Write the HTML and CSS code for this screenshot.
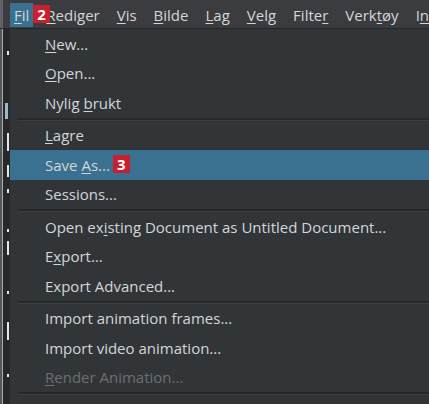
FILE: index.html
```html
<!DOCTYPE html>
<html>
<head>
<meta charset="utf-8">
<link rel="stylesheet" href="styles.css">
</head>
<body>
<div class="app">
  <div class="menubar">
    <span class="mb-item active"><span><u>F</u>il</span></span>
    <span class="mb-item"><span><u>R</u>ediger</span></span>
    <span class="mb-item"><span><u>V</u>is</span></span>
    <span class="mb-item"><span><u>B</u>ilde</span></span>
    <span class="mb-item"><span><u>L</u>ag</span></span>
    <span class="mb-item"><span><u>V</u>elg</span></span>
    <span class="mb-item"><span>Filte<u>r</u></span></span>
    <span class="mb-item"><span>Verk<u>t</u>øy</span></span>
    <span class="mb-item"><span>I<u>n</u>nstillinger</span></span>
    <span class="badge badge-top">2</span>
  </div>
  <div class="main">
    <div class="strip">
      <i class="tick t1"></i><i class="tick t2"></i><i class="tick t3"></i><i class="tick t4"></i>
      <i class="tick t5"></i><i class="tick t6"></i><i class="tick t7"></i><i class="tick t8"></i>
      <i class="tick t9"></i><i class="tick t10"></i>
    </div>
    <div class="menu">
      <div class="item"><span><u>N</u>ew...</span></div>
      <div class="item"><span><u>O</u>pen...</span></div>
      <div class="item"><span>Nylig <u>b</u>rukt</span></div>
      <div class="sep"></div>
      <div class="item"><span><u>L</u>agre</span></div>
      <div class="item active"><span>Save <u>A</u>s...</span><span class="badge badge-inline">3</span></div>
      <div class="item"><span>Sessions...</span></div>
      <div class="sep"></div>
      <div class="item"><span>Open ex<u>i</u>sting Document as Untitled Document...</span></div>
      <div class="item"><span>E<u>x</u>port...</span></div>
      <div class="item"><span>Export Advanced...</span></div>
      <div class="sep"></div>
      <div class="item"><span>Import animation frames...</span></div>
      <div class="item"><span>Import video animation...</span></div>
      <div class="item disabled"><span><u>R</u>ender Animation...</span></div>
      <div class="sep"></div>
    </div>
  </div>
</div>
</body>
</html>
```
FILE: styles.css
```css
html, body {
  margin: 0;
  padding: 0;
  background: #323538;
}
body {
  width: 429px;
  height: 404px;
  overflow: hidden;
  font-family: "Open Sans", "Noto Sans", sans-serif;
  font-size: 15px;
  color: #d3d6d8;
}
u {
  text-decoration-thickness: 1px;
  text-underline-offset: 2px;
}
.app {
  display: flex;
  flex-direction: column;
  height: 404px;
}
.menubar {
  position: relative;
  height: 29px;
  flex: none;
  display: flex;
  align-items: stretch;
  gap: 9px;
  padding: 3px 0 0 10px;
  box-sizing: border-box;
  background: linear-gradient(to right, #5f6265 0 3px, #3a3c3f 3px);
  border-bottom: 1px solid #252729;
  white-space: nowrap;
  overflow: hidden;
}
.mb-item {
  display: flex;
  align-items: center;
  padding: 0 4px 1px;
  height: 24px;
  box-sizing: border-box;
  flex: none;
}
.mb-item.active {
  background: #3a7191;
}
.badge {
  display: inline-flex;
  align-items: center;
  justify-content: center;
  width: 17px;
  height: 18px;
  background: #c8202f;
  color: #ffffff;
  font-family: "Open Sans", sans-serif;
  font-weight: 700;
  font-size: 15px;
  line-height: 1;
}
.badge-top {
  position: absolute;
  left: 33px;
  top: 5px;
}
.badge-inline {
  margin-left: 3px;
  margin-top: -1px;
}
.main {
  flex: 1;
  display: flex;
  min-height: 0;
}
.strip {
  position: relative;
  width: 10px;
  flex: none;
  background: linear-gradient(to right, #55585b 0 2px, #a9abad 2px 3px, #26282a 3px);
}
.tick {
  position: absolute;
  left: 7px;
  width: 2px;
  background: #e6e6e6;
}
.t1 { top: 22px; height: 4px; }
.t2 { top: 74px; height: 16px; left: 5px; width: 3px; background: #9fb8c6; }
.t3 { top: 104px; height: 18px; }
.t4 { top: 136px; height: 12px; }
.t5 { top: 160px; height: 4px; }
.t6 { top: 200px; height: 3px; }
.t7 { top: 212px; height: 14px; }
.t8 { top: 262px; height: 3px; }
.t9 { top: 293px; height: 18px; }
.t10 { top: 345px; height: 3px; }
.menu {
  flex: 1;
  display: flex;
  flex-direction: column;
  background: #323538;
}
.item {
  height: 29.5px;
  flex: none;
  display: flex;
  align-items: center;
  padding-left: 35px;
  white-space: nowrap;
}
.item.active {
  background: #3a7191;
}
.item.disabled {
  color: #6b6e71;
}
.sep {
  height: 3px;
  flex: none;
  box-sizing: border-box;
  margin-left: 8px;
  border-top: 2px solid #26282a;
  border-bottom: 1px solid #3c3f42;
}
```
